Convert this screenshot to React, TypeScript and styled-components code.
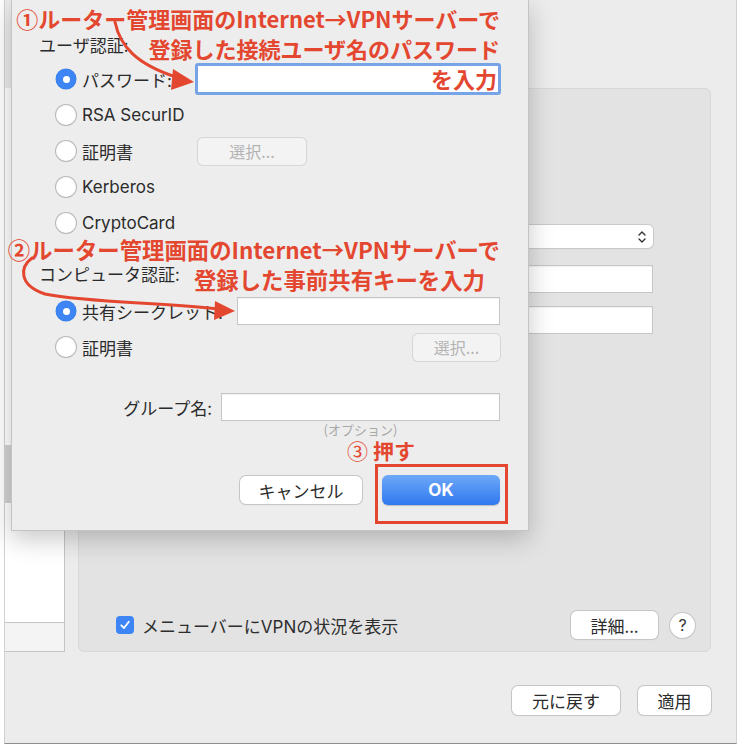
import React from "react";
import styled, { createGlobalStyle } from "styled-components";

const RED = "#e4472f";
const UI = `Inter, "Noto Sans CJK JP", sans-serif`;
const JP = `"Noto Sans CJK JP", sans-serif`;

const Global = createGlobalStyle`
  html, body { margin: 0; padding: 0; background: #ffffff; }
  * { box-sizing: border-box; }
`;

const Screen = styled.div`
  position: relative;
  width: 750px;
  height: 748px;
  overflow: hidden;
  background: #ffffff;
  font-family: ${UI};
  color: #2b2b2b;
`;

const Window = styled.div`
  margin-left: 4px;
  width: 733px;
  height: 744px;
  background: #ececec;
  border-bottom: 1px solid #8f8f8f;
  border-right: 1px solid #d2d2d2;
  border-left: 1px solid #d2d2d2;
  display: flex;
  flex-direction: column;
`;

const Main = styled.div`
  display: flex;
  gap: 13px;
  padding-top: 88px;
`;

const Sidebar = styled.div`
  width: 60px;
  height: 564px;
  display: flex;
  flex-direction: column;
  background: #ffffff;
  border-right: 1px solid #c4c4c4;
  border-bottom: 1px solid #c4c4c4;
`;

const SideList = styled.div`
  flex: 1;
  padding-top: 9px;
  display: flex;
  flex-direction: column;
`;

const SideItem = styled.div<{ $selected?: boolean }>`
  height: 58px;
  background: ${(p) => (p.$selected ? "#d3d3d3" : "transparent")};
`;

const SideBar = styled.div`
  height: 29px;
  background: #f4f4f4;
  border-top: 1px solid #c4c4c4;
`;

const Pane = styled.div`
  width: 633px;
  height: 564px;
  background: #e3e3e3;
  border: 1px solid #d8d8d8;
  border-radius: 6px;
  display: flex;
  flex-direction: column;
  padding: 136px 15px 12px 37px;
`;

const FieldStack = styled.div`
  display: flex;
  flex-direction: column;
  align-items: flex-end;
  gap: 17px;
  padding-right: 42px;
`;

const Popup = styled.div`
  width: 360px;
  height: 23px;
  background: #ffffff;
  border-radius: 5px;
  box-shadow: 0 0 0 1px #c9c9c9, 0 1px 1px rgba(0, 0, 0, 0.15);
  display: flex;
  align-items: center;
  justify-content: flex-end;
  padding-right: 6px;
`;

const TextField = styled.div<{ $w: number; $h?: number }>`
  width: ${(p) => p.$w}px;
  height: ${(p) => p.$h ?? 28}px;
  background: #ffffff;
  border: 1px solid #c6c6c6;
  box-shadow: inset 0 1px 1px rgba(0, 0, 0, 0.06);
`;

const Spacer = styled.div`
  flex: 1;
`;

const PaneBottom = styled.div`
  display: flex;
  align-items: center;
  height: 28px;
`;

const Check = styled.div`
  width: 18px;
  height: 18px;
  border-radius: 4px;
  background: #3d85f4;
  display: flex;
  align-items: center;
  justify-content: center;
  margin-right: 8px;
`;

const CheckLabel = styled.span`
  font-family: ${UI};
  font-size: 17px;
  color: #2e2e2e;
  flex: 1;
`;

const PushButton = styled.div<{ $w: number; $h?: number }>`
  width: ${(p) => p.$w}px;
  height: ${(p) => p.$h ?? 28}px;
  background: #ffffff;
  border-radius: 6px;
  box-shadow: 0 0 0 1px #c6c6c6, 0 1px 1px rgba(0, 0, 0, 0.15);
  display: flex;
  align-items: center;
  justify-content: center;
  font-family: ${JP};
  font-size: 17px;
  color: #2b2b2b;
`;

const HelpButton = styled.div`
  width: 25px;
  height: 25px;
  border-radius: 50%;
  background: #ffffff;
  box-shadow: 0 0 0 1px #c6c6c6, 0 1px 1px rgba(0, 0, 0, 0.15);
  margin-left: 12px;
  display: flex;
  align-items: center;
  justify-content: center;
  font-size: 16px;
  color: #333;
`;

const Footer = styled.div`
  display: flex;
  justify-content: flex-end;
  gap: 18px;
  padding-right: 25px;
  margin-top: 34px;
`;

/* ---------- sheet ---------- */

const Sheet = styled.div`
  position: absolute;
  left: 11px;
  top: 0;
  width: 518px;
  height: 531px;
  background: #ededed;
  border: 1px solid #c4c4c4;
  border-top: none;
  box-shadow: 0 8px 24px rgba(0, 0, 0, 0.22);
  display: flex;
  flex-direction: column;
  padding-top: 35px;
`;

const SectionLabel = styled.div<{ $mt?: number }>`
  margin-left: 27px;
  margin-top: ${(p) => p.$mt ?? 0}px;
  height: 20px;
  line-height: 20px;
  font-family: ${JP};
  font-size: 17px;
  color: #2b2b2b;
`;

const Row = styled.div<{ $mt?: number }>`
  display: flex;
  align-items: center;
  height: 36px;
  padding-left: 44px;
  margin-top: ${(p) => p.$mt ?? 0}px;
`;

const Radio = styled.div<{ $on?: boolean }>`
  width: 20px;
  height: 20px;
  border-radius: 50%;
  flex: none;
  margin-right: 6px;
  background: ${(p) => (p.$on ? "#3d85f4" : "#ffffff")};
  box-shadow: ${(p) =>
    p.$on ? "0 0 0 0.5px #3a7ee8" : "0 0 0 1px #b9b9b9, 0 1px 1px rgba(0,0,0,0.12)"};
  display: flex;
  align-items: center;
  justify-content: center;
  &::after {
    content: "";
    display: ${(p) => (p.$on ? "block" : "none")};
    width: 7px;
    height: 7px;
    border-radius: 50%;
    background: #ffffff;
  }
`;

const OptLabel = styled.span<{ $w?: number }>`
  width: ${(p) => (p.$w ? `${p.$w}px` : "auto")};
  flex: none;
  font-size: 17px;
  color: #2b2b2b;
  white-space: nowrap;
`;

const FocusField = styled.div`
  width: 306px;
  height: 32px;
  background: #ffffff;
  border: 3px solid #77a4e6;
  border-radius: 3px;
`;

const SmallButton = styled.div<{ $w: number }>`
  width: ${(p) => p.$w}px;
  height: 27px;
  background: #f3f3f3;
  border-radius: 5px;
  box-shadow: 0 0 0 1px #d6d6d6;
  display: flex;
  align-items: center;
  justify-content: center;
  font-family: ${JP};
  font-size: 16px;
  color: #b3b3b3;
`;

const GroupRow = styled.div`
  display: flex;
  align-items: center;
  gap: 9px;
  margin-top: 28px;
  height: 28px;
`;

const GroupLabel = styled.span`
  width: 200px;
  text-align: right;
  font-family: ${JP};
  font-size: 17px;
  color: #2b2b2b;
`;

const Hint = styled.div`
  margin-left: 209px;
  width: 279px;
  margin-top: 1px;
  text-align: center;
  font-family: ${JP};
  font-size: 13px;
  line-height: 16px;
  color: #a8a8a8;
`;

const ButtonRow = styled.div`
  display: flex;
  justify-content: flex-end;
  align-items: center;
  gap: 20px;
  padding-right: 28px;
  margin-top: 37px;
  height: 30px;
`;

const OkButton = styled.div`
  width: 118px;
  height: 30px;
  border-radius: 6px;
  background: linear-gradient(#6ea8f8, #2f78ef);
  box-shadow: 0 1px 1px rgba(0, 0, 0, 0.2);
  display: flex;
  align-items: center;
  justify-content: center;
  color: #ffffff;
  font-weight: 700;
  font-size: 17px;
`;

/* ---------- annotations ---------- */

const Note = styled.div<{ $top: number; $size: number }>`
  position: absolute;
  right: 250px;
  top: ${(p) => p.$top}px;
  text-align: right;
  white-space: nowrap;
  color: ${RED};
  font-family: ${JP};
  font-weight: 700;
  font-size: ${(p) => p.$size}px;
  line-height: 30px;
`;

const NoteLine = styled.div<{ $shift?: number }>`
  margin-right: ${(p) => p.$shift ?? 0}px;
`;

const PushNote = styled.div`
  position: absolute;
  left: 347px;
  top: 440px;
  color: ${RED};
  font-family: ${JP};
  font-size: 21px;
  line-height: 20px;
  white-space: nowrap;
`;

const PushWord = styled.span`
  font-weight: 700;
  margin-left: 5px;
`;

const Highlight = styled.div`
  position: absolute;
  left: 375px;
  top: 464px;
  width: 133px;
  height: 60px;
  border: 3px solid ${RED};
`;

const ArrowLayer = styled.svg`
  position: absolute;
  left: 0;
  top: 0;
  pointer-events: none;
`;

export default function App() {
  return (
    <Screen>
      <Global />
      <Window>
        <Main>
          <Sidebar>
            <SideList>
              <SideItem />
              <SideItem />
              <SideItem />
              <SideItem />
              <SideItem />
              <SideItem />
              <SideItem $selected />
            </SideList>
            <SideBar />
          </Sidebar>
          <Pane>
            <FieldStack>
              <Popup>
                <svg width="10" height="14" viewBox="0 0 10 14">
                  <path d="M2 5 L5 2 L8 5 M2 9 L5 12 L8 9" fill="none" stroke="#333" strokeWidth="1.4" strokeLinecap="round" strokeLinejoin="round" />
                </svg>
              </Popup>
              <TextField $w={360} />
              <TextField $w={360} style={{ marginTop: -4 }} />
            </FieldStack>
            <Spacer />
            <PaneBottom>
              <Check>
                <svg width="12" height="12" viewBox="0 0 12 12">
                  <path d="M2.3 6.3 L5 9 L9.8 2.8" fill="none" stroke="#fff" strokeWidth="1.8" strokeLinecap="round" strokeLinejoin="round" />
                </svg>
              </Check>
              <CheckLabel>メニューバーにVPNの状況を表示</CheckLabel>
              <PushButton $w={87}>詳細...</PushButton>
              <HelpButton>?</HelpButton>
            </PaneBottom>
          </Pane>
        </Main>
        <Footer>
          <PushButton $w={108} $h={29}>元に戻す</PushButton>
          <PushButton $w={73} $h={29}>適用</PushButton>
        </Footer>
      </Window>

      <Sheet>
        <SectionLabel>ユーザ認証:</SectionLabel>
        <Row $mt={6}>
          <Radio $on />
          <OptLabel $w={113}>パスワード:</OptLabel>
          <FocusField />
        </Row>
        <Row>
          <Radio />
          <OptLabel>RSA SecurID</OptLabel>
        </Row>
        <Row>
          <Radio />
          <OptLabel $w={116}>証明書</OptLabel>
          <SmallButton $w={108}>選択...</SmallButton>
        </Row>
        <Row>
          <Radio />
          <OptLabel>Kerberos</OptLabel>
        </Row>
        <Row>
          <Radio />
          <OptLabel>CryptoCard</OptLabel>
        </Row>
        <SectionLabel $mt={23}>コンピュータ認証:</SectionLabel>
        <Row $mt={9}>
          <Radio $on />
          <OptLabel $w={155}>共有シークレット:</OptLabel>
          <TextField $w={263} />
        </Row>
        <Row>
          <Radio />
          <OptLabel $w={331}>証明書</OptLabel>
          <SmallButton $w={87}>選択...</SmallButton>
        </Row>
        <GroupRow>
          <GroupLabel>グループ名:</GroupLabel>
          <TextField $w={279} />
        </GroupRow>
        <Hint>(オプション)</Hint>
        <ButtonRow>
          <PushButton $w={122}>キャンセル</PushButton>
          <OkButton>OK</OkButton>
        </ButtonRow>
      </Sheet>

      <Note $top={3} $size={22}>
        <NoteLine>①ルーター管理画面のInternet→VPNサーバーで</NoteLine>
        <NoteLine>登録した接続ユーザ名のパスワード</NoteLine>
        <NoteLine $shift={3}>を入力</NoteLine>
      </Note>
      <Note $top={234} $size={22.4}>
        <NoteLine>②ルーター管理画面のInternet→VPNサーバーで</NoteLine>
        <NoteLine $shift={15}>登録した事前共有キーを入力</NoteLine>
      </Note>
      <PushNote>
        ③<PushWord>押す</PushWord>
      </PushNote>
      <Highlight />

      <ArrowLayer width="750" height="748" viewBox="0 0 750 748">
        <path d="M115 22 C120 46 136 64 176 77" fill="none" stroke={RED} strokeWidth="3" strokeLinecap="round" />
        <polygon points="194,82 173,69 171,90" fill={RED} />
        <path d="M32 258 C20 267 18 285 45 294 C90 303 160 302 218 309" fill="none" stroke={RED} strokeWidth="3" strokeLinecap="round" />
        <polygon points="235,311 215,301 214,320" fill={RED} />
      </ArrowLayer>
    </Screen>
  );
}
